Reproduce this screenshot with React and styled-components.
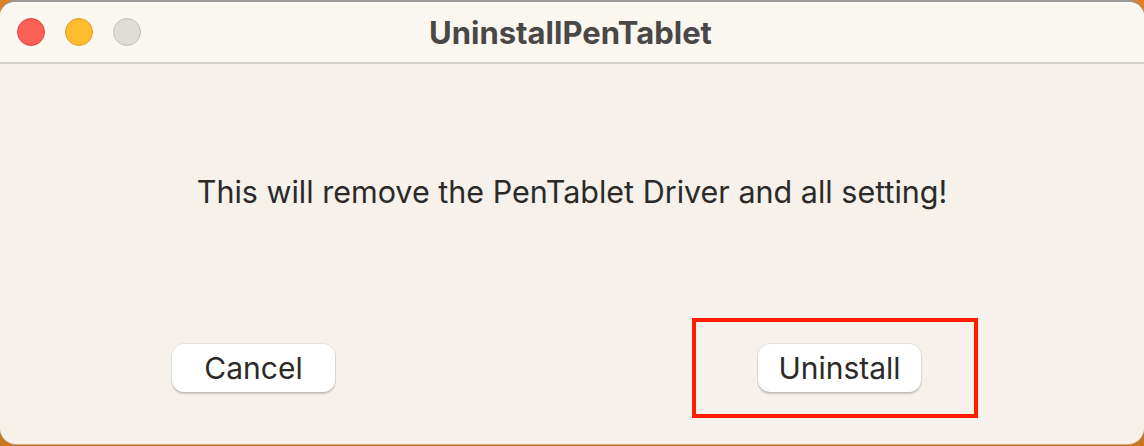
import React from "react";
import styled, { createGlobalStyle } from "styled-components";

const GlobalStyle = createGlobalStyle`
  html, body {
    margin: 0;
    padding: 0;
    background: #d9822b;
  }
  body {
    font-family: Inter, "Noto Sans", "Liberation Sans", sans-serif;
  }
`;

const Desktop = styled.div`
  width: 1144px;
  height: 446px;
  box-sizing: border-box;
  padding-bottom: 2px;
  background: linear-gradient(#d9822b, #c9741f);
  overflow: hidden;
`;

const Window = styled.div`
  height: 444px;
  display: flex;
  flex-direction: column;
  background: #f6f1eb;
  border-top: 2px solid #9a9a9a;
  border-radius: 16px;
  box-shadow: 0 1px 0 #c7ab85;
  box-sizing: border-box;
  overflow: hidden;
`;

const TitleBar = styled.div`
  height: 60px;
  display: flex;
  align-items: center;
  background: #faf6f0;
  border-bottom: 2px solid #d6d1ca;
`;

const Lights = styled.div`
  display: flex;
  gap: 20px;
  padding-left: 17px;
`;

const Light = styled.span`
  width: 28px;
  height: 28px;
  border-radius: 50%;
  box-sizing: border-box;
  background: ${(p) => p.color};
  border: 1px solid ${(p) => p.edge};
`;

const Title = styled.div`
  flex: 1;
  text-align: center;
  margin-right: 144px;
  font-size: 31px;
  font-weight: 700;
  color: #4a4846;
`;

const Body = styled.div`
  flex: 1;
  display: flex;
  flex-direction: column;
`;

const Message = styled.p`
  margin: 0;
  padding-top: 110px;
  line-height: 36px;
  text-align: center;
  font-size: 30.5px;
  color: #2b2a29;
`;

const ButtonRow = styled.div`
  display: flex;
  align-items: center;
  margin-top: 108px;
  padding-left: 172px;
`;

const Button = styled.button`
  width: 163px;
  height: 48px;
  padding: 0;
  border: none;
  border-radius: 12px;
  background: #ffffff;
  box-shadow: 0 0 0 1px rgba(0, 0, 0, 0.06), 0 2px 2px rgba(0, 0, 0, 0.18);
  font-family: inherit;
  font-size: 30px;
  color: #2b2a29;
  cursor: pointer;
`;

const Highlight = styled.div`
  width: 286px;
  height: 100px;
  margin-left: 357px;
  padding-left: 9px;
  box-sizing: border-box;
  border: 4px solid #ff1a00;
  display: flex;
  align-items: center;
  justify-content: center;
`;

export default function App() {
  return (
    <Desktop>
      <GlobalStyle />
      <Window>
        <TitleBar>
          <Lights>
            <Light color="#fe5f57" edge="#e0443e" />
            <Light color="#febc2e" edge="#dea123" />
            <Light color="#dfdbd5" edge="#c8c3bc" />
          </Lights>
          <Title>UninstallPenTablet</Title>
        </TitleBar>
        <Body>
          <Message>This will remove the PenTablet Driver and all setting!</Message>
          <ButtonRow>
            <Button>Cancel</Button>
            <Highlight>
              <Button>Uninstall</Button>
            </Highlight>
          </ButtonRow>
        </Body>
      </Window>
    </Desktop>
  );
}
